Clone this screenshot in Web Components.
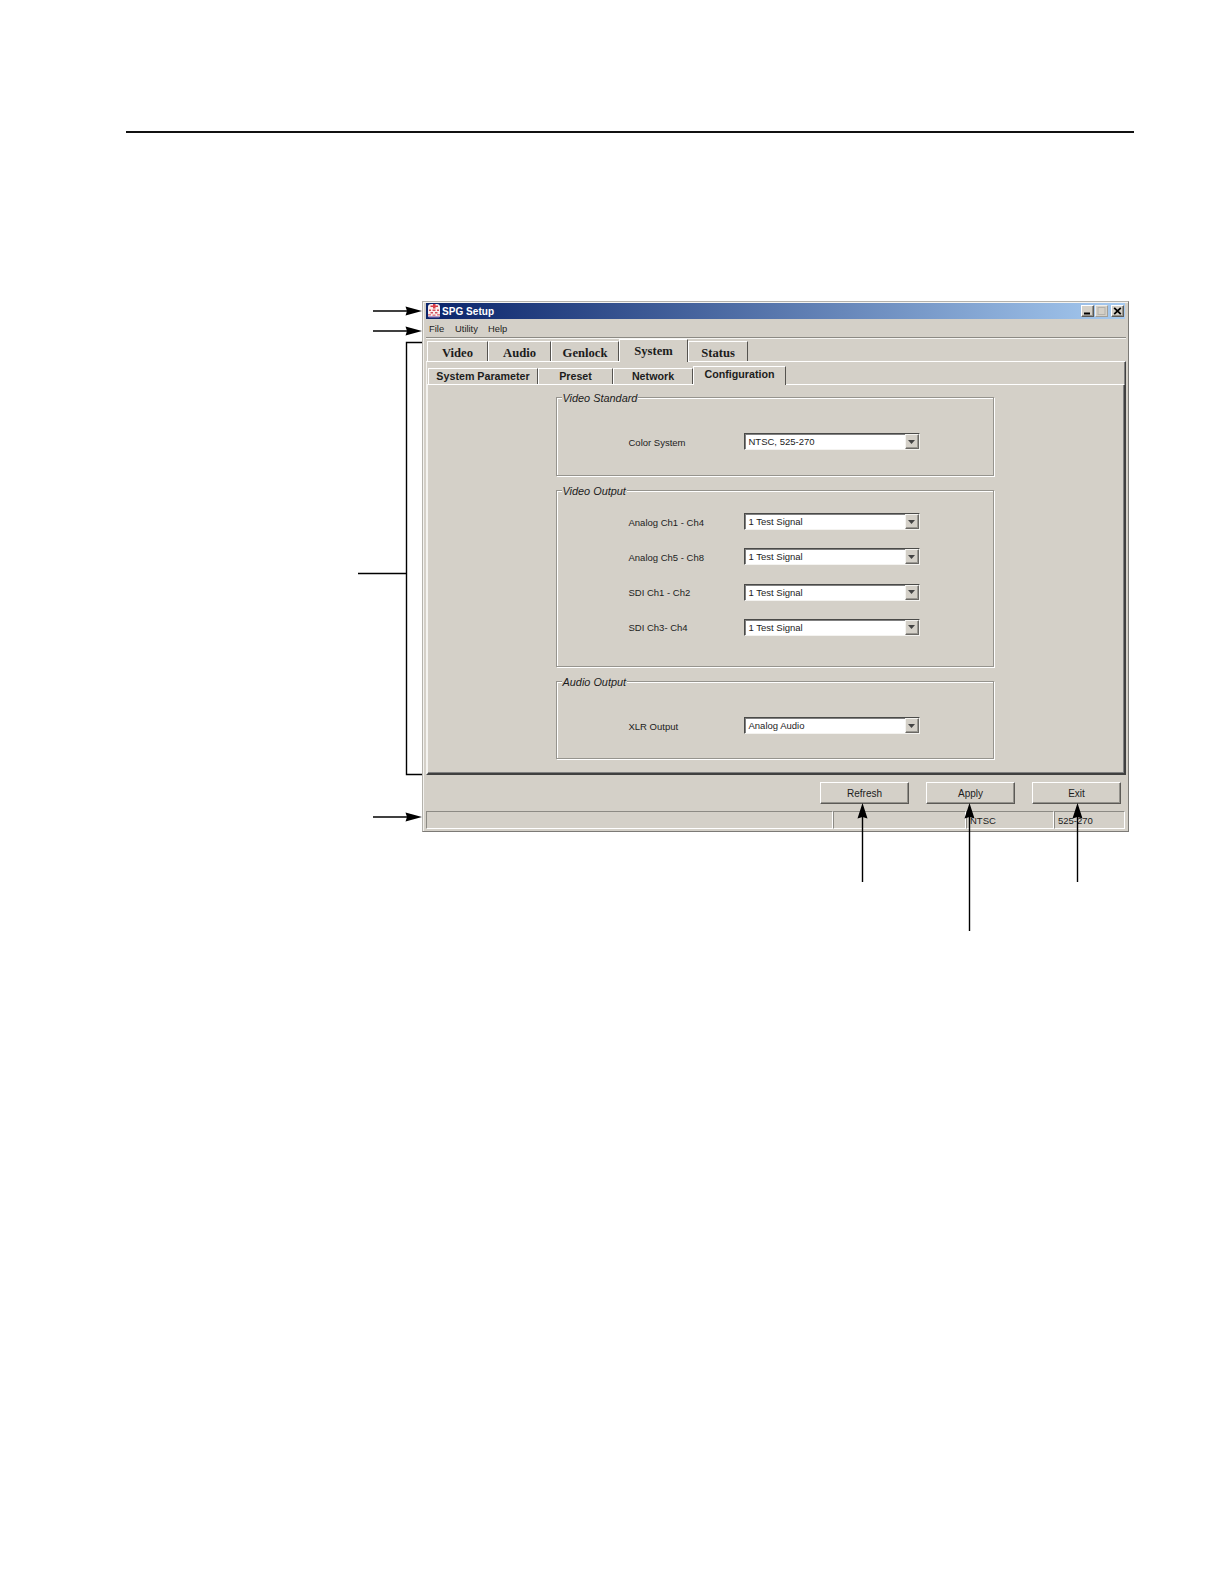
<!DOCTYPE html>
<html>
<head>
<meta charset="utf-8">
<title>SPG Setup</title>
<style>
  html, body { margin: 0; background: #fff; }
</style>
</head>
<body>
<spg-page>
  <spg-window>
    <spg-titlebar slot="title">SPG Setup</spg-titlebar>
    <spg-menubar slot="menu">
      <span>File</span><span>Utility</span><span>Help</span>
    </spg-menubar>
    <spg-tabpane slot="main" class="outer">
      <spg-tab slot="tabs" style="width:61px">Video</spg-tab>
      <spg-tab slot="tabs" style="width:63px">Audio</spg-tab>
      <spg-tab slot="tabs" style="width:68px">Genlock</spg-tab>
      <spg-tab slot="tabs" style="width:69px" selected>System</spg-tab>
      <spg-tab slot="tabs" style="width:60px">Status</spg-tab>
      <spg-tabpane class="inner">
        <spg-tab slot="tabs" style="width:110px">System Parameter</spg-tab>
        <spg-tab slot="tabs" style="width:75px">Preset</spg-tab>
        <spg-tab slot="tabs" style="width:80px">Network</spg-tab>
        <spg-tab slot="tabs" style="width:93px" selected>Configuration</spg-tab>
        <spg-config>
          <spg-group label="Video Standard" style="--top:35px;height:79px">
            <spg-row label="Color System" value="NTSC, 525-270"></spg-row>
          </spg-group>
          <spg-group label="Video Output" style="--top:22px;height:177px">
            <spg-row label="Analog Ch1 - Ch4" value="1 Test Signal"></spg-row>
            <spg-row label="Analog Ch5 - Ch8" value="1 Test Signal"></spg-row>
            <spg-row label="SDI Ch1 - Ch2" value="1 Test Signal"></spg-row>
            <spg-row label="SDI Ch3- Ch4" value="1 Test Signal"></spg-row>
          </spg-group>
          <spg-group label="Audio Output" style="--top:35px;height:78px">
            <spg-row label="XLR Output" value="Analog Audio"></spg-row>
          </spg-group>
        </spg-config>
      </spg-tabpane>
    </spg-tabpane>
    <spg-actions slot="actions">
      <spg-button>Refresh</spg-button>
      <spg-button>Apply</spg-button>
      <spg-button>Exit</spg-button>
    </spg-actions>
    <spg-statusbar slot="status" mode="NTSC" rate="525-270"></spg-statusbar>
  </spg-window>
  <spg-callouts></spg-callouts>
</spg-page>

<script>
// small helper so every element gets an open shadow root with its own styles
class Base extends HTMLElement {
  render(html) {
    this.attachShadow({ mode: 'open' });
    this.shadowRoot.innerHTML = html;
  }
}

const SANS = '"Liberation Sans", Arial, sans-serif';
const SERIF = '"Liberation Serif", "Times New Roman", serif';

class SpgPage extends Base {
  connectedCallback() {
    this.render(`
      <style>
        :host { display: block; position: relative; width: 1224px; height: 1584px; overflow: hidden; background: #fff; }
        .rule { height: 2px; margin: 131px 90px 168px 126px; background: #111; }
        .holder { margin-left: 422px; }
      </style>
      <div class="rule"></div>
      <div class="holder"><slot></slot></div>
    `);
  }
}

class SpgWindow extends Base {
  connectedCallback() {
    this.render(`
      <style>
        :host {
          display: flex; flex-direction: column; box-sizing: border-box;
          width: 707px; height: 531px; padding: 1px 2px 1px 2px;
          background: #d4d0c8; color: #1c1c1c; font: 9.5px ${SANS};
          border: 1px solid #b4b2ac; border-right-color: #7c7a76; border-bottom-color: #7c7a76;
          box-shadow: inset 1px 1px 0 #f4f3f0;
        }
        .main { flex: 1; min-height: 0; display: flex; }
      </style>
      <slot name="title"></slot>
      <slot name="menu"></slot>
      <div class="main"><slot name="main"></slot></div>
      <slot name="actions"></slot>
      <slot name="status"></slot>
    `);
  }
}

class SpgTitlebar extends Base {
  connectedCallback() {
    this.render(`
      <style>
        :host {
          display: flex; align-items: center; height: 16px; margin: 0 1px 0 1px;
          background: linear-gradient(90deg, #0a246a, #a6caf0);
          color: #fff; font: bold 10px ${SANS}; letter-spacing: .05px;
        }
        svg.logo { flex: none; }
        .txt { flex: 1; }
        .btns { display: flex; margin-right: 1px; }
        .b {
          box-sizing: border-box; width: 13px; height: 12px; background: #d4d0c8;
          border: 1px solid; border-color: #fff #5c5a56 #5c5a56 #fff; box-shadow: inset -1px -1px 0 #94928c;
          display: flex; align-items: center; justify-content: center; margin-left: 1px;
        }
        .b.max { border-color: #f0efec #a09e98 #a09e98 #f0efec; box-shadow: none; }
        .b.close { margin-left: 3px; }
      </style>
      <svg class="logo" width="16" height="16" viewBox="0 0 16 16">
        <rect x="2" y="1" width="12" height="14" rx="3" fill="#f8eeee"/>
        <path d="M7 1h2.500v1.500H12V4H9.500v1.500H7V4H4.500V2.500H7z" fill="#d83a46"/>
        <path d="M3 6.500h2v1.500H3zM6.500 6.500h3V8h-3zM11 6.500h2V8h-2zM4.500 9h2.500v1.500H4.500zM9 9h2.500v1.500H9z" fill="#d2505c"/>
        <path d="M2 11h3v1.500H2zM6.500 11.500h3V13h-3zM11 11h3v1.500h-3z" fill="#e8808a"/>
        <path d="M3 13.500h10V15H3z" fill="#5a4a9a"/>
      </svg>
      <span class="txt"><slot></slot></span>
      <span class="btns">
        <span class="b"><svg width="9" height="8" viewBox="0 0 9 8"><rect x="1" y="5.500" width="6" height="2" fill="#000"/></svg></span>
        <span class="b max"><svg width="9" height="8" viewBox="0 0 9 8"><rect x="1" y=".5" width="7" height="7" fill="none" stroke="#b4b2ac"/></svg></span>
        <span class="b close"><svg width="9" height="8" viewBox="0 0 9 8"><path d="M1.200 .8L7.800 7.200M7.800 .8L1.200 7.200" fill="none" stroke="#000" stroke-width="1.800"/></svg></span>
      </span>
    `);
  }
}

class SpgMenubar extends Base {
  connectedCallback() {
    this.render(`
      <style>
        :host {
          display: block; box-sizing: border-box; height: 19px; margin-left: 1px; font-size: 9.4px;
          border-bottom: 1px solid #8c8a84; box-shadow: 0 1px 0 #f6f5f2;
        }
        .items { display: flex; height: 18px; align-items: center; padding-left: 3px; }
        ::slotted(span) { display: block; }
        ::slotted(span:nth-child(1)) { width: 26px; }
        ::slotted(span:nth-child(2)) { width: 33px; }
      </style>
      <div class="items"><slot></slot></div>
    `);
  }
}

// Used twice: the serif top-level tabs and the sans second row
class SpgTabpane extends Base {
  connectedCallback() {
    this.render(`
      <style>
        :host { display: flex; flex-direction: column; flex: 1; min-width: 0; }
        :host(.outer) {
          margin-left: 1px; padding-top: 3px;
          --tab-font: bold 12.6px ${SERIF}; --tab-h: 20px; --tab-pad: 3px 0 0; --tab-sel-pad: 3px 0 3px;
        }
        :host(.inner) {
          margin-top: 6px;
          --tab-font: bold 10.7px ${SANS}; --tab-h: 16px; --tab-pad: 0 0 1px; --tab-sel-pad: 0 0 4px;
        }
        .strip { display: flex; align-items: flex-end; height: var(--tab-h); padding-left: 1px; position: relative; z-index: 1; }
        .pane {
          flex: 1; min-height: 0; display: flex; flex-direction: column; box-sizing: border-box;
          border-top: 1px solid #fff; border-left: 1px solid #f4f3f0;
          border-right: 1px solid #404040; border-bottom: 1px solid #404040;
          box-shadow: inset -1px -1px 0 #808080;
        }
      </style>
      <div class="strip"><slot name="tabs"></slot></div>
      <div class="pane"><slot></slot></div>
    `);
  }
}

class SpgTab extends Base {
  connectedCallback() {
    this.render(`
      <style>
        :host {
          display: flex; align-items: center; justify-content: center; box-sizing: border-box;
          height: var(--tab-h); font: var(--tab-font); color: #1c1c1c; background: #d4d0c8;
          border-top: 1px solid #fff; border-left: 1px solid #fff; border-right: 1px solid #55534f;
          white-space: nowrap; padding: var(--tab-pad);
        }
        :host([selected]) {
          height: calc(var(--tab-h) + 3px); margin-bottom: -1px; padding: var(--tab-sel-pad);
        }
      </style>
      <slot></slot>
    `);
  }
}

class SpgConfig extends Base {
  connectedCallback() {
    this.render(`
      <style>
        :host { display: flex; flex-direction: column; align-items: center; gap: 14px; padding: 12px 3px 0 0; }
      </style>
      <slot></slot>
    `);
  }
}

class SpgGroup extends Base {
  connectedCallback() {
    this.render(`
      <style>
        :host {
          display: block; position: relative; box-sizing: border-box; width: 438px;
          border: 1px solid #96948e; box-shadow: inset 1px 1px 0 #fff, 1px 1px 0 #fff;
          padding-top: var(--top); padding-left: 72px;
        }
        .legend {
          position: absolute; left: 5px; top: -6px; padding: 0 1px; background: #d4d0c8;
          font: italic 10.9px/12px ${SANS};
        }
        .rows { display: flex; flex-direction: column; gap: 18.3px; }
      </style>
      <span class="legend">${this.getAttribute('label')}</span>
      <div class="rows"><slot></slot></div>
    `);
  }
}

class SpgRow extends Base {
  connectedCallback() {
    this.render(`
      <style>
        :host { display: flex; align-items: center; height: 17px; }
        .label { width: 115px; padding-top: 1px; }
      </style>
      <span class="label">${this.getAttribute('label')}</span>
      <spg-combo value="${this.getAttribute('value')}"></spg-combo>
    `);
  }
}

class SpgCombo extends Base {
  connectedCallback() {
    this.render(`
      <style>
        :host {
          display: flex; box-sizing: border-box; width: 176px; height: 17px; background: #fff;
          border: 1px solid; border-color: #4a4a48 #f4f3f0 #f4f3f0 #4a4a48;
          box-shadow: inset 1px 1px 0 #808080;
        }
        .val { flex: 1; padding: 2px 0 0 4px; line-height: 12px; }
        .arrow {
          box-sizing: border-box; width: 14px; height: 15px; background: #d4d0c8;
          border: 1px solid; border-color: #f4f3f0 #6a6864 #6a6864 #f4f3f0; box-shadow: inset -1px -1px 0 #9a9892;
          display: flex; align-items: center; justify-content: center;
        }
      </style>
      <span class="val">${this.getAttribute('value')}</span>
      <span class="arrow"><svg width="7" height="4" viewBox="0 0 7 4"><path d="M0 0h7L3.500 4z" fill="#444"/></svg></span>
    `);
  }
}

class SpgActions extends Base {
  connectedCallback() {
    this.render(`
      <style>
        :host { display: flex; justify-content: flex-end; gap: 17px; box-sizing: border-box; height: 35px; padding: 7px 5px 0 0; }
      </style>
      <slot></slot>
    `);
  }
}

class SpgButton extends Base {
  connectedCallback() {
    this.render(`
      <style>
        :host {
          display: flex; align-items: center; justify-content: center; box-sizing: border-box;
          width: 89px; height: 22px; background: #d4d0c8; font-size: 10px; padding-top: 1px;
          border: 1px solid; border-color: #fff #5c5a56 #5c5a56 #fff; box-shadow: inset -1px -1px 0 #94928c;
        }
      </style>
      <slot></slot>
    `);
  }
}

class SpgStatusbar extends Base {
  connectedCallback() {
    this.render(`
      <style>
        :host { display: flex; box-sizing: border-box; height: 20px; margin-left: 1px; padding: 1px 1px 1px 0; }
        .cell {
          box-sizing: border-box; height: 18px; padding: 2px 0 0 3px; line-height: 13px;
          border: 1px solid; border-color: #8c8a84 #fff #fff #8c8a84;
        }
        .a { flex: 1; }
        .b { width: 133px; }
        .c { width: 88px; }
        .d { width: 71px; }
      </style>
      <div class="cell a"></div>
      <div class="cell b"></div>
      <div class="cell c">${this.getAttribute('mode')}</div>
      <div class="cell d">${this.getAttribute('rate')}</div>
    `);
  }
}

// leader lines and arrow heads that sit on top of the screenshot
class SpgCallouts extends Base {
  connectedCallback() {
    const right = (y) => `<path d="M373 ${y}H408"/><path class="h" d="M422 ${y}L405.500 ${y - 4.500}L407 ${y}L405.500 ${y + 4.500}z"/>`;
    const up = (x, y2) => `<path d="M${x} 815V${y2}"/><path class="h" d="M${x} 803L${x - 5} 818.500L${x} 817L${x + 5} 818.500z"/>`;
    this.render(`
      <style>
        :host { position: absolute; inset: 0; pointer-events: none; }
        svg { display: block; }
        path { fill: none; stroke: #000; stroke-width: 1.4; }
        path.h { fill: #000; stroke: none; }
      </style>
      <svg width="1224" height="1584" viewBox="0 0 1224 1584">
        ${right(311)}
        ${right(331)}
        ${right(817)}
        <path d="M422 342.500H406.500V774.500H422"/>
        <path d="M358 573.500H406.500"/>
        ${up(862.500, 882)}
        ${up(969.500, 931)}
        ${up(1077.500, 882)}
      </svg>
    `);
  }
}

customElements.define('spg-page', SpgPage);
customElements.define('spg-window', SpgWindow);
customElements.define('spg-titlebar', SpgTitlebar);
customElements.define('spg-menubar', SpgMenubar);
customElements.define('spg-tabpane', SpgTabpane);
customElements.define('spg-tab', SpgTab);
customElements.define('spg-config', SpgConfig);
customElements.define('spg-group', SpgGroup);
customElements.define('spg-row', SpgRow);
customElements.define('spg-combo', SpgCombo);
customElements.define('spg-actions', SpgActions);
customElements.define('spg-button', SpgButton);
customElements.define('spg-statusbar', SpgStatusbar);
customElements.define('spg-callouts', SpgCallouts);
</script>
</body>
</html>
